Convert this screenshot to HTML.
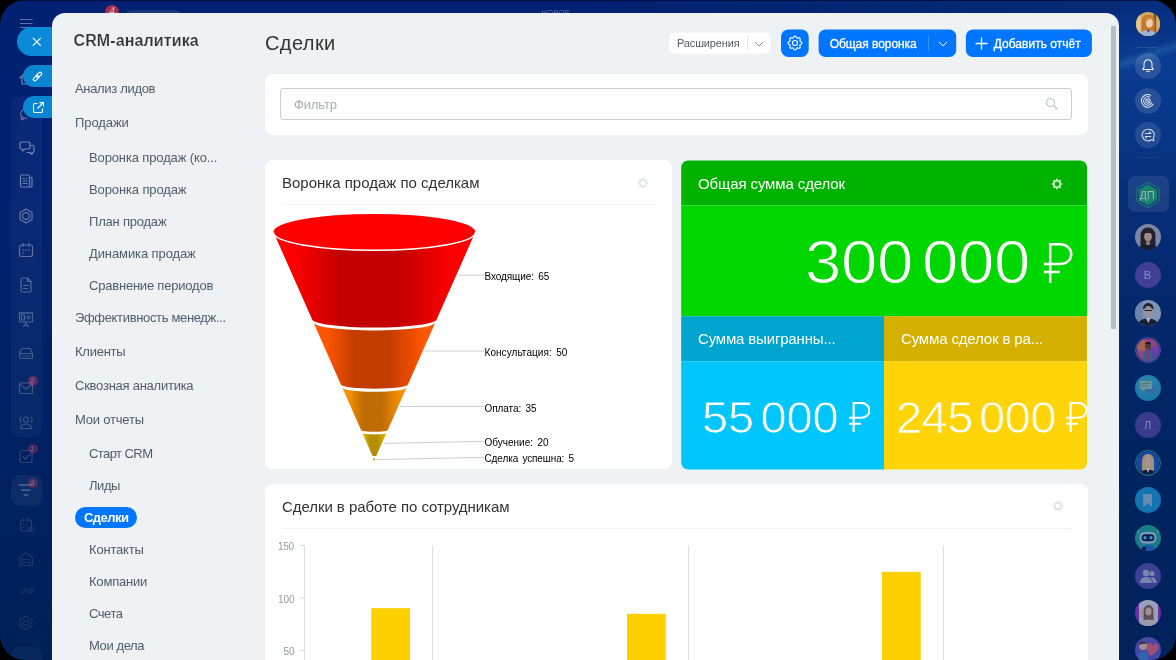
<!DOCTYPE html>
<html lang="ru">
<head>
<meta charset="utf-8">
<title>CRM-аналитика</title>
<style>
*{box-sizing:border-box;margin:0;padding:0}
html,body{width:1176px;height:660px;overflow:hidden;background:#000;font-family:"Liberation Sans",sans-serif;}
#frame{position:absolute;left:0;top:0;width:1176px;height:660px;border-radius:25px;overflow:hidden;
 background:linear-gradient(180deg,#022172 0%,#022170 30%,#012164 60%,#002058 100%);}
.abs{position:absolute}
#rbar{position:absolute;left:1119px;top:0;width:57px;height:660px;
 background:linear-gradient(180deg,#062c7c 0%,#0a3c92 9%,#09398b 20%,#063180 30%,#042a6e 50%,#022662 75%,#01235c 100%);}
#rbar2{position:absolute;left:1100px;top:0;width:20px;height:660px;
 background:linear-gradient(180deg,#062c7c 0%,#0a3c92 9%,#09398b 20%,#063180 30%,#042a6e 50%,#022662 75%,#01235c 100%);}
#streak{position:absolute;left:-8px;top:48px;width:76px;height:14px;transform:rotate(-19.5deg);background:linear-gradient(180deg,rgba(70,150,195,0) 0%,rgba(70,150,195,.26) 50%,rgba(70,150,195,0) 100%);}
#panel{position:absolute;left:52.2px;top:12.7px;width:1067.2px;height:660px;background:#eef2f4;border-radius:13px 13px 0 0;}
#menu,#content,#rbar,#lbar,#topstrip{will-change:transform}
.t{position:absolute;white-space:nowrap;line-height:1}
.mi{position:absolute;white-space:nowrap;font-size:13px;line-height:16px;color:#525c69}
.fl{font-size:10px;color:#000;word-spacing:1.6px}
.ax{font-size:10px;color:#8e9ba6}
.card{position:absolute;background:#fff;border-radius:8px}
</style>
<style id="ls">#mtitle{letter-spacing:0.12px}#m0{letter-spacing:-0.33px}#m1{letter-spacing:-0.08px}#m2{letter-spacing:-0.13px}#m3{letter-spacing:-0.12px}#m4{letter-spacing:-0.21px}#m5{letter-spacing:-0.10px}#m6{letter-spacing:-0.21px}#m7{letter-spacing:-0.34px}#m8{letter-spacing:-0.25px}#m9{letter-spacing:-0.25px}#m10{letter-spacing:-0.20px}#m11{letter-spacing:-0.57px}#m12{letter-spacing:-0.42px}#mact{letter-spacing:-0.53px}#m13{letter-spacing:-0.19px}#m14{letter-spacing:-0.20px}#m15{letter-spacing:-0.47px}#m16{letter-spacing:-0.40px}#h1{letter-spacing:0.42px}#filt{letter-spacing:-0.12px}#bext{letter-spacing:-0.14px}#bfun{letter-spacing:-0.05px}#badd{letter-spacing:0.03px}#ft{letter-spacing:-0.00px}#k1{letter-spacing:-0.12px}#k2{letter-spacing:-0.17px}#k3{letter-spacing:-0.15px}#bt{letter-spacing:-0.06px}#fl0{letter-spacing:-0.09px}#fl1{letter-spacing:0.06px}#fl2{letter-spacing:-0.07px}#fl3{letter-spacing:-0.00px}#fl4{letter-spacing:-0.11px}#ax0{letter-spacing:-0.28px}</style>
</head>
<body>
<svg width="0" height="0" style="position:absolute"><defs>
<symbol id="rub" viewBox="0 0 29 40" overflow="visible"><path d="M6.2 40V1.25H16.3A11 9.875 0 0 1 16.3 21H0M0 29H15.8" fill="none" stroke="#fff" stroke-width="2.5"/></symbol>
<symbol id="rubs" viewBox="0 0 29 40" overflow="visible"><path d="M6.2 40V1.25H16.3A11 9.875 0 0 1 16.3 21H0M0 29H15.8" fill="none" stroke="#fff" stroke-width="2.9"/></symbol>
</defs></svg>
<div id="frame">
 <div id="rbar"><div id="streak"></div>
 <svg class="abs" style="left:16.5px;top:11.8px" width="24" height="24" viewBox="0 0 26 26"><defs><clipPath id="c1"><circle cx="13" cy="13" r="13"/></clipPath></defs><g clip-path="url(#c1)"><rect width="26" height="26" fill="#d9a55e"/><rect x="0" width="5" height="26" fill="#e8c48a"/><rect x="19" width="3" height="26" fill="#7a5230"/><rect x="22" width="4" height="26" fill="#e0aa60"/><path d="M6 26V12c0-6 3-9 7.500-9s7 3 7 8v15z" fill="#c07a30"/><ellipse cx="14.500" cy="12" rx="3.800" ry="4.800" fill="#f1cfae"/><path d="M9 8c2-4 8-4 10 0-3-1-6 0-8 3z" fill="#cf8a3a"/><path d="M4 26c0-4 4-6.500 9-6.500s9 2.500 9 6.500z" fill="#9db4d4"/><path d="M12 19.500l1.500 3 1.500-3z" fill="#5a2a30"/></g></svg>
 <div class="abs" style="left:18px;top:46.500px;width:20px;height:1px;background:rgba(255,255,255,.13)"></div>
 <div class="abs" style="left:15.5px;top:53px;width:26px;height:26px;border-radius:50%;background:rgba(255,255,255,.14);"><svg style="position:absolute;left:5px;top:5px;opacity:0.92" width="16" height="16" viewBox="0 0 16 16"><g fill="none" stroke="#fff" stroke-width="1.1" stroke-linecap="round" stroke-linejoin="round"><path d="M8 1.800c-2.600 0-4 2-4 4.300v3.200l-1.300 2.200h10.600L12 9.300V6.100c0-2.300-1.400-4.300-4-4.300zM6.500 13.300h3"/></g></svg></div>
 <div class="abs" style="left:15.5px;top:87.5px;width:26px;height:26px;border-radius:50%;background:rgba(255,255,255,.13);"><svg style="position:absolute;left:5px;top:5px;opacity:0.88" width="16" height="16" viewBox="0 0 16 16"><g fill="none" stroke="#fff" stroke-width="1.1" stroke-linecap="round" stroke-linejoin="round"><path d="M13.200 11A6.300 6.300 0 1 1 10.500 2.200"/><path d="M11.600 9.800A4.200 4.200 0 1 1 9.500 4"/><circle cx="8" cy="8" r="2.200"/><path d="M7.200 7l1.600 2"/></g></svg></div>
 <div class="abs" style="left:15.5px;top:121.5px;width:26px;height:26px;border-radius:50%;background:rgba(255,255,255,.12);"><svg style="position:absolute;left:5px;top:5px;opacity:0.88" width="16" height="16" viewBox="0 0 16 16"><g fill="none" stroke="#fff" stroke-width="1.1" stroke-linecap="round" stroke-linejoin="round"><path d="M8 2.200a5.800 5.800 0 1 0 3.400 10.500l2.400 1-.6-2.500A5.800 5.800 0 0 0 8 2.200z"/><path d="M5.200 6.500h5.600l-1.400-1.400M10.800 9.500H5.200l1.400 1.400"/></g></svg></div>
 <div class="abs" style="left:18px;top:157px;width:20px;height:1px;background:rgba(255,255,255,.07)"></div>
 <div class="abs" style="left:9px;top:176.200px;width:40.700px;height:36.300px;border-radius:7px;background:rgba(255,255,255,.11)"></div>
 <svg class="abs" style="left:15px;top:181px" width="28" height="28" viewBox="0 0 28 28"><path d="M14 1.200l11.100 6.400v12.800L14 26.800 2.900 20.400V7.600z" fill="none" stroke="#1d9a78" stroke-width="1"/><path d="M14 3.600l9 5.200v10.400l-9 5.200-9-5.200V8.800z" fill="#1c9a72"/></svg>
 <div class="t" style="left:20.800px;top:189.800px;font-size:10.500px;color:rgba(215,238,228,.85);letter-spacing:.2px">ДП</div>
 <svg class="abs" style="left:15.5px;top:224px" width="26" height="26" viewBox="0 0 26 26"><defs><clipPath id="c2"><circle cx="13" cy="13" r="13"/></clipPath></defs><g clip-path="url(#c2)"><rect width="26" height="26" fill="#9aa3b8"/><path d="M5.500 26V12c0-5.500 3.500-8.500 7.500-8.500s7.500 3 7.500 8.500v14z" fill="#2c2226"/><ellipse cx="13" cy="12.500" rx="3.900" ry="5" fill="#cfa590"/><path d="M8.500 10c1-4 8-4 9 0-2-1.500-7-1.500-9 0z" fill="#2c2226"/><path d="M3 26c0-3.500 4.500-5.500 10-5.500s10 2 10 5.500z" fill="#1c1c26"/><path d="M11 17.500h4l-.5 3.500h-3z" fill="#c49a86"/></g></svg>
 <div class="abs" style="left:15.5px;top:262px;width:26px;height:26px;border-radius:50%;background:#5348a8;color:rgba(255,255,255,.55);font-size:11px;line-height:26px;text-align:center">В</div>
 <svg class="abs" style="left:15.5px;top:299.5px" width="26" height="26" viewBox="0 0 26 26"><defs><clipPath id="c3"><circle cx="13" cy="13" r="13"/></clipPath></defs><g clip-path="url(#c3)"><rect width="26" height="26" fill="#a9bad2"/><rect x="0" y="0" width="8" height="26" fill="#8fa6c6"/><path d="M8 9c0-4 2.500-6 5.500-6s5 2 5 6z" fill="#2a2a32"/><ellipse cx="13.300" cy="11" rx="4" ry="5" fill="#d2b5a2"/><path d="M9.500 10.500h7.500" stroke="#222" stroke-width="1"/><path d="M2.500 26c0-5 4.500-7.500 10.500-7.500s10.500 2.500 10.500 7.500z" fill="#1e2430"/><path d="M11 18l2.300 5 2.300-5z" fill="#e8ecf2"/></g></svg>
 <svg class="abs" style="left:15.5px;top:337px" width="26" height="26" viewBox="0 0 26 26"><defs><clipPath id="c4"><circle cx="13" cy="13" r="11.3"/></clipPath></defs><g clip-path="url(#c4)"><rect width="26" height="26" fill="#c4508e"/><circle cx="6" cy="8" r="6" fill="#e07a50"/><circle cx="21" cy="16" r="7" fill="#8a4ac0"/><path d="M8.500 26V17c0-2.500 2-4 4.500-4s4.500 1.500 4.500 4v9z" fill="#2a86a8"/><ellipse cx="13" cy="9" rx="3" ry="3.800" fill="#6a4636"/><path d="M10 7c.5-3 5.500-3 6 0z" fill="#1a1418"/><path d="M11.500 13h3v13h-3z" fill="#c83a6a"/></g><circle cx="13" cy="13" r="12.4" fill="none" stroke="#7a6ac8" stroke-width="1"/></svg>
 <div class="abs" style="left:15.5px;top:374.5px;width:26px;height:26px;border-radius:50%;background:radial-gradient(circle at 40% 35%,#4fb0b8 0,#2aa0c8 50%,#1c8cc4 100%);"><svg style="position:absolute;left:4px;top:5px;opacity:.85" width="18" height="16" viewBox="0 0 18 16"><path d="M7 6h10v7h-2v2l-3-2h-5z" fill="#4a7fc0"/><path d="M1 1h12v8H6l-3 2.500V9H1z" fill="#9fc0c0"/><path d="M3 3.500h8M3 6h6" stroke="#6aa040" stroke-width="1.200"/></svg></div>
 <div class="abs" style="left:15.5px;top:412px;width:26px;height:26px;border-radius:50%;background:#5046a4;color:rgba(255,255,255,.55);font-size:11px;line-height:26px;text-align:center">Л</div>
 <svg class="abs" style="left:15.5px;top:449.5px" width="26" height="26" viewBox="0 0 26 26"><defs><clipPath id="c5"><circle cx="13" cy="13" r="11.3"/></clipPath></defs><g clip-path="url(#c5)"><rect width="26" height="26" fill="#2358c0"/><path d="M7 22V11.500c0-5 2.700-7.500 6-7.500s6 2.500 6 7.500V22z" fill="#e2c088"/><ellipse cx="13" cy="11.300" rx="3.100" ry="4.200" fill="#efc4a8"/><path d="M9.700 9.500c.8-3.500 5.800-3.500 6.600 0-2-1.500-4.500-1.500-6.600 0z" fill="#e8ca92"/><path d="M4.500 26c0-4 3.500-6.200 8.500-6.200s8.500 2.200 8.500 6.200z" fill="#141a30"/><path d="M11.400 18.500l1.600 4.500 1.600-4.500z" fill="#f2f4fa"/></g><circle cx="13" cy="13" r="12.4" fill="none" stroke="#2fb09a" stroke-width="1"/></svg>
 <div class="abs" style="left:15.5px;top:487px;width:26px;height:26px;border-radius:50%;background:#1d9ad6;"><svg style="position:absolute;left:8.300px;top:6.500px;opacity:.82" width="9.500" height="13" viewBox="0 0 10 14"><path d="M0 0h10v14l-5-4-5 4z" fill="#b4bfdc"/></svg></div>
 <svg class="abs" style="left:15.5px;top:525px" width="26" height="26" viewBox="0 0 26 26"><defs><clipPath id="c6"><circle cx="13" cy="13" r="13"/></clipPath></defs><g clip-path="url(#c6)"><rect width="26" height="26" fill="#25a89a"/><path d="M4 9l-2-4M22 9l2-4" stroke="#7ac0e8" stroke-width="1.200"/><rect x="4.500" y="7" width="17" height="11.500" rx="5.500" fill="#b8d4f0"/><rect x="6.500" y="9.300" width="13" height="7" rx="3.500" fill="#101c48"/><circle cx="10" cy="12.800" r="1.700" fill="#48d4f4"/><circle cx="16" cy="12.800" r="1.700" fill="#48d4f4"/><path d="M6 26c0-3.800 3-6 7-6s7 2.200 7 6z" fill="#2a6ad8"/><rect x="7" y="22" width="4" height="4" fill="#101c48"/></g></svg>
 <div class="abs" style="left:15.5px;top:562.5px;width:26px;height:26px;border-radius:50%;background:#5a50b4;"><svg style="position:absolute;left:4px;top:6px;opacity:.75" width="18" height="14" viewBox="0 0 18 14"><circle cx="7" cy="4" r="3.200" fill="#cdd"/><path d="M1 14c0-4 2.500-6 6-6s6 2 6 6z" fill="#cdd"/><circle cx="13" cy="4.500" r="2.600" fill="#cdd"/><path d="M12 8c3 0 5.500 2 5.500 6H14" fill="#cdd"/></svg></div>
 <svg class="abs" style="left:15.5px;top:599.5px" width="26" height="26" viewBox="0 0 26 26"><defs><clipPath id="c7"><circle cx="13" cy="13" r="13"/></clipPath></defs><g clip-path="url(#c7)"><rect width="26" height="26" fill="#9a38d0"/><rect x="4" y="0" width="19" height="26" fill="#e4e0ea"/><path d="M8.500 20V11.500c0-4 2.200-6.500 5-6.500s5 2.500 5 6.500V20z" fill="#8a6858"/><ellipse cx="13.500" cy="11.500" rx="3" ry="4" fill="#ecc8b4"/><path d="M5 26c0-4.200 4-6.500 8.500-6.500s8.500 2.300 8.500 6.500z" fill="#ead8d0"/><path d="M4.500 17l1-8.500 2.200.4-.8 9z" fill="#ecc8b4"/></g></svg>
 <svg class="abs" style="left:15.5px;top:637px" width="26" height="26" viewBox="0 0 26 26"><defs><clipPath id="c8"><circle cx="13" cy="13" r="13"/></clipPath></defs><g clip-path="url(#c8)"><rect width="26" height="26" fill="#6a5cd0"/><path d="M11 8c1.500-3 6-3 6.500.5 1.500-3.500 7-2 6 2.500-.8 3.500-5 6-7.500 8-2-2-5.500-5-5-11z" fill="#f06a80"/><circle cx="8" cy="9" r="4" fill="#f2c8b0"/><path d="M3.500 8c0-4 7-5 8.500-1-2-.5-5 0-8.500 1z" fill="#5a3a40"/><path d="M4 26v-8c0-2 2-3.500 4.500-3.500S13 16 13 18v8z" fill="#4a8ad8"/></g></svg>
 <div class="abs" id="rdim" style="left:0;top:0;width:57px;height:660px;background:linear-gradient(180deg,rgba(0,30,88,0) 0,rgba(0,30,88,0) 8%,rgba(0,30,88,.08) 20%,rgba(0,30,88,.2) 30%,rgba(0,30,88,.25) 50%,rgba(0,30,88,.3) 75%,rgba(0,30,88,.35) 100%)"></div>
</div>
<div id="lbar">
 <div class="abs" style="left:11px;top:97px;width:31px;height:340px;border-radius:8px;background:rgba(255,255,255,.035)"></div>
 <div class="abs" style="left:11px;top:475px;width:31px;height:31px;border-radius:8px;background:rgba(255,255,255,.05)"></div>
 <div class="abs" style="left:11px;top:647px;width:31px;height:31px;border-radius:8px;background:rgba(255,255,255,.04)"></div>
 <svg class="abs" style="left:20px;top:18px;opacity:.38" width="13" height="11" viewBox="0 0 13 11"><path d="M0 1.5h12.5M0 5.5h12.5M0 9.5h12.5" stroke="#fff" stroke-width="1.1"/></svg>
 <svg class="abs" style="left:18px;top:70px;opacity:0.468" width="16" height="16" viewBox="0 0 16 16"><g fill="none" stroke="#fff" stroke-width="1.2" stroke-linecap="round" stroke-linejoin="round"><path d="M2 8l6-6 6 6M4 7v7h8V7"/></g></svg>
 <svg class="abs" style="left:17px;top:106px;opacity:0.34" width="16" height="16" viewBox="0 0 16 16"><g fill="none" stroke="#fff" stroke-width="1.2" stroke-linecap="round" stroke-linejoin="round"><path d="M9 3.500a4.500 4.500 0 1 0 1 8.500"/><circle cx="5.500" cy="12.500" r="1.200"/></g></svg>
 <svg class="abs" style="left:18.5px;top:139.5px;opacity:0.425" width="16" height="16" viewBox="0 0 16 16"><g fill="none" stroke="#fff" stroke-width="1.2" stroke-linecap="round" stroke-linejoin="round"><path d="M2.5 2h7a1.5 1.5 0 0 1 1.500 1.500v4a1.500 1.500 0 0 1-1.500 1.500H6l-2.500 2v-2h-1A1.500 1.500 0 0 1 1 7.500v-4A1.500 1.500 0 0 1 2.500 2z"/><path d="M12.500 5.500h1a1.500 1.500 0 0 1 1.500 1.500v4a1.500 1.500 0 0 1-1.500 1.500h-.5v2l-2.500-2H8"/></g></svg>
 <svg class="abs" style="left:18.3px;top:173.3px;opacity:0.399" width="16" height="16" viewBox="0 0 16 16"><g fill="none" stroke="#fff" stroke-width="1.2" stroke-linecap="round" stroke-linejoin="round"><path d="M2.500 3.500a1.500 1.500 0 0 1 1.500-1.500h6a1.500 1.500 0 0 1 1.500 1.500v9a1.500 1.500 0 0 1-1.500 1.500h-6a1.500 1.500 0 0 1-1.500-1.500z"/><path d="M5 5.500h1.500M8.500 5.500h.5M5 8h4M5 10.500h4M11.500 4.500h1.500a1 1 0 0 1 1 1v7.500a1 1 0 0 1-1 1h-2"/></g></svg>
 <svg class="abs" style="left:18px;top:207.7px;opacity:0.374" width="16" height="16" viewBox="0 0 16 16"><g fill="none" stroke="#fff" stroke-width="1.2" stroke-linecap="round" stroke-linejoin="round"><path d="M8 1l6 3.500v7l-6 3.500-6-3.500v-7z"/><path d="M8 4.300l3.300 1.900v3.700l-3.300 1.900-3.300-1.900V6.200z"/></g></svg>
 <svg class="abs" style="left:18px;top:241.5px;opacity:0.34" width="16" height="16" viewBox="0 0 16 16"><g fill="none" stroke="#fff" stroke-width="1.2" stroke-linecap="round" stroke-linejoin="round"><rect x="1.500" y="3" width="13" height="11.500" rx="2"/><path d="M5 1.500v3M11 1.500v3M4.500 8h1M7.500 8h1M10.500 8h1M4.500 11h1"/></g></svg>
 <svg class="abs" style="left:18px;top:276.5px;opacity:0.306" width="16" height="16" viewBox="0 0 16 16"><g fill="none" stroke="#fff" stroke-width="1.2" stroke-linecap="round" stroke-linejoin="round"><path d="M3 2.500a1.500 1.500 0 0 1 1.500-1.500h5l3.500 3.500v9a1.500 1.500 0 0 1-1.500 1.500h-7a1.500 1.500 0 0 1-1.500-1.500z"/><path d="M9.500 1v3.500h3.500M5.500 8.500h5M5.500 11.500h4"/></g></svg>
 <svg class="abs" style="left:18px;top:311px;opacity:0.272" width="16" height="16" viewBox="0 0 16 16"><g fill="none" stroke="#fff" stroke-width="1.2" stroke-linecap="round" stroke-linejoin="round"><rect x="1.500" y="2" width="13" height="9" rx="1"/><rect x="3.500" y="4" width="3" height="5"/><circle cx="10.500" cy="6.500" r="1.500"/><path d="M1 2h14M8 11v2M5.500 15.500l2.500-2.500 2.500 2.500"/></g></svg>
 <svg class="abs" style="left:18px;top:345.3px;opacity:0.238" width="16" height="16" viewBox="0 0 16 16"><g fill="none" stroke="#fff" stroke-width="1.2" stroke-linecap="round" stroke-linejoin="round"><path d="M1.500 9l1.500-4a2 2 0 0 1 2-1.500h6a2 2 0 0 1 2 1.500l1.500 4v3a1.500 1.500 0 0 1-1.500 1.500h-10a1.500 1.500 0 0 1-1.500-1.500zM1.500 8.500h13"/><path d="M4 11h1M7 11h5"/></g></svg>
 <svg class="abs" style="left:18px;top:379.5px;opacity:0.212" width="16" height="16" viewBox="0 0 16 16"><g fill="none" stroke="#fff" stroke-width="1.2" stroke-linecap="round" stroke-linejoin="round"><rect x="1.500" y="3" width="13" height="10.500" rx="1"/><path d="M1.500 4l6.500 5 6.500-5"/></g></svg>
 <svg class="abs" style="left:18px;top:414px;opacity:0.204" width="16" height="16" viewBox="0 0 16 16"><g fill="none" stroke="#fff" stroke-width="1.2" stroke-linecap="round" stroke-linejoin="round"><circle cx="8" cy="5.500" r="2.500"/><path d="M2.500 14.500c0-3 2.500-4.500 5.500-4.500s5.500 1.500 5.500 4.500zM3 3c-1.500 1-1.500 4 0 5M13 3c1.500 1 1.500 4 0 5"/></g></svg>
 <svg class="abs" style="left:18px;top:447.7px;opacity:0.17" width="16" height="16" viewBox="0 0 16 16"><g fill="none" stroke="#fff" stroke-width="1.2" stroke-linecap="round" stroke-linejoin="round"><rect x="2" y="2.500" width="12" height="12" rx="2"/><path d="M5 8.500l2.500 2.500 4-4.500"/></g></svg>
 <svg class="abs" style="left:18px;top:482px;opacity:.2" width="16" height="16" viewBox="0 0 16 16"><path d="M1.500 3h13M4 8h8M6.500 13h3" stroke="#fff" stroke-width="2" stroke-linecap="round"/></svg>
 <svg class="abs" style="left:18.5px;top:516.5px;opacity:0.136" width="16" height="16" viewBox="0 0 16 16"><g fill="none" stroke="#fff" stroke-width="1.2" stroke-linecap="round" stroke-linejoin="round"><rect x="1.500" y="3" width="11" height="11" rx="2"/><path d="M4.500 1.500v3M9.500 1.500v3M4 7.500h1M7 7.500h1M4 10.500h1M9 11h6M9 14h6"/></g></svg>
 <svg class="abs" style="left:18px;top:550.7px;opacity:0.102" width="16" height="16" viewBox="0 0 16 16"><g fill="none" stroke="#fff" stroke-width="1.2" stroke-linecap="round" stroke-linejoin="round"><path d="M1.500 14.500v-8l6.500-4.500 6.500 4.500v8z"/><path d="M4 14.500v-6h8v6M4 11.500h8"/></g></svg>
 <svg class="abs" style="left:18.5px;top:581.5px;opacity:0.085" width="16" height="16" viewBox="0 0 16 16"><g fill="none" stroke="#fff" stroke-width="1.2" stroke-linecap="round" stroke-linejoin="round"><path d="M1 11c2-4 5-5 7-3M3 12c1-2 3-3 4-2M10 9l3-3 2 2-3 3h-2z"/></g></svg>
 <svg class="abs" style="left:18px;top:614.5px;opacity:0.085" width="16" height="16" viewBox="0 0 16 16"><g fill="none" stroke="#fff" stroke-width="1.2" stroke-linecap="round" stroke-linejoin="round"><circle cx="8" cy="8" r="2.500"/><path d="M6.600 1.300h2.800l.5 1.700 1.300.75 1.700-.4 1.400 2.400-1.200 1.300v1.500l1.200 1.300-1.400 2.400-1.700-.4-1.300.75-.5 1.700H6.600l-.5-1.700-1.300-.75-1.700.4-1.400-2.400 1.200-1.300V7.050L1.700 5.750l1.400-2.400 1.700.4L6.100 3z"/></g></svg>
 <div class="abs" style="left:27.5px;top:375.5px;width:10px;height:10px;border-radius:5px;background:#d8305a;opacity:0.4;color:#fff;font-size:8px;line-height:10px;text-align:center">2</div>
 <div class="abs" style="left:27.5px;top:443.8px;width:10px;height:10px;border-radius:5px;background:#d8305a;opacity:0.34;color:#fff;font-size:8px;line-height:10px;text-align:center">1</div>
 <div class="abs" style="left:27.5px;top:478px;width:10px;height:10px;border-radius:5px;background:#d8305a;opacity:0.32;color:#fff;font-size:8px;line-height:10px;text-align:center">4</div>
 <div class="abs" style="left:17px;top:27px;width:60px;height:29px;border-radius:14.500px 0 0 14.500px;background:#0a8ad9"></div>
 <svg class="abs" style="left:32.300px;top:36.700px" width="9.600" height="9.600" viewBox="0 0 9 9"><path d="M0.800 0.800l7.400 7.400M8.200 0.800L0.800 8.200" stroke="#fff" stroke-width="1"/></svg>
 <div class="abs" style="left:23px;top:65px;width:60px;height:22px;border-radius:11px 0 0 11px;background:#0a85d2"></div>
 <svg class="abs" style="left:32px;top:70.500px" width="11" height="11" viewBox="0 0 11 11"><g fill="none" stroke="#fff" stroke-width="1.1"><rect x="0.300" y="4" width="6.200" height="3" rx="1.500" transform="rotate(-40 3.400 5.500) translate(-.6 1.700)"/><rect x="4.500" y="4" width="6.200" height="3" rx="1.500" transform="rotate(-40 7.600 5.500) translate(.6 -1.700)"/></g></svg>
 <div class="abs" style="left:23px;top:96px;width:60px;height:22px;border-radius:11px 0 0 11px;background:#0a85d2"></div>
 <svg class="abs" style="left:32.500px;top:101.500px" width="11" height="11" viewBox="0 0 11 11"><g fill="none" stroke="#fff" stroke-width="1.100"><path d="M4.500 1.500h-2.500a1.500 1.500 0 0 0-1.500 1.500v6a1.500 1.500 0 0 0 1.500 1.500h6a1.500 1.500 0 0 0 1.500-1.500v-2.500M4.500 6.500l5.500-5.500M6.500 0.600h4v4"/></g></svg>
</div>
<div id="rbar2"></div>
<div id="topstrip">
 <div class="abs" style="left:600px;top:0;width:519.5px;height:14px;background:linear-gradient(90deg,rgba(6,44,124,0),#062a78)"></div>
 <div class="abs" style="left:0;top:0;width:1176px;height:1px;background:rgba(0,4,30,.6)"></div>
 <div class="abs" style="left:105px;top:4.5px;width:14px;height:14px;border-radius:7px;background:#a3304c;color:rgba(255,255,255,.6);font-size:10px;line-height:14px;text-align:center;font-style:italic">4</div>
 <div class="abs" style="left:124.5px;top:10px;width:56.5px;height:14px;border-radius:7px;background:rgba(255,255,255,.09)"></div>
 <div class="t" style="left:541.5px;top:8.7px;font-size:7.5px;color:rgba(255,255,255,.36);letter-spacing:.35px">НОВОЕ</div>
</div>
 <div id="panel"></div>
 <div class="abs" style="left:1111.3px;top:25.5px;width:4.8px;height:303.5px;background:#b8bebf"></div>
 <div id="menu">
 <div class="t" id="mtitle" style="left:73.5px;top:33.2px;font-size:16px;font-weight:bold;color:#333;-webkit-text-stroke:.2px #eef2f4;">CRM-аналитика</div>
 <div class="mi" id="m0" style="left:75px;top:81px">Анализ лидов</div>
 <div class="mi" id="m1" style="left:75px;top:115px">Продажи</div>
 <div class="mi" id="m2" style="left:89px;top:150px">Воронка продаж (ко...</div>
 <div class="mi" id="m3" style="left:89px;top:181.5px">Воронка продаж</div>
 <div class="mi" id="m4" style="left:89px;top:213.5px">План продаж</div>
 <div class="mi" id="m5" style="left:89px;top:245.5px">Динамика продаж</div>
 <div class="mi" id="m6" style="left:89px;top:277.5px">Сравнение периодов</div>
 <div class="mi" id="m7" style="left:75px;top:309.5px">Эффективность менедж...</div>
 <div class="mi" id="m8" style="left:75px;top:343.5px">Клиенты</div>
 <div class="mi" id="m9" style="left:75px;top:377.5px">Сквозная аналитика</div>
 <div class="mi" id="m10" style="left:75px;top:411.5px">Мои отчеты</div>
 <div class="mi" id="m11" style="left:89px;top:446px">Старт CRM</div>
 <div class="mi" id="m12" style="left:89px;top:478px">Лиды</div>
 <div class="mi" id="m13" style="left:89px;top:542px">Контакты</div>
 <div class="mi" id="m14" style="left:89px;top:574px">Компании</div>
 <div class="mi" id="m15" style="left:89px;top:606px">Счета</div>
 <div class="mi" id="m16" style="left:89px;top:638px">Мои дела</div>
 <div class="abs" style="left:75px;top:507px;width:62px;height:21px;border-radius:11px;background:#0075ff"></div>
 <div class="mi" id="mact" style="left:84px;top:509.5px;color:#fff;font-weight:bold">Сделки</div>
</div>
<div id="content">
 <div class="t" id="h1" style="left:265px;top:33.4px;font-size:20px;color:#333">Сделки</div>
 <!-- header buttons -->
<svg class="abs" style="left:660px;top:20px" width="440" height="45" viewBox="660 20 440 45">
<rect x="669" y="32.7" width="101.400" height="21" rx="5" fill="#fff"/>
<rect x="781" y="29.400" width="27.700" height="27.500" rx="7.500" fill="#0075ff"/>
<rect x="818.600" y="29.400" width="137.600" height="27.600" rx="7" fill="#0075ff"/>
<rect x="965.900" y="29.400" width="126" height="27.600" rx="7" fill="#0075ff"/>
</svg>
 <div class="t" id="bext" style="left:677px;top:38px;font-size:11px;color:#525c69">Расширения</div>
 <div class="abs" style="left:747px;top:37px;width:1px;height:13px;background:#e4e7ea"></div>
 <svg class="abs" style="left:754px;top:40px" width="10" height="8" viewBox="0 0 10 8"><path d="M1 2l4 4 4-4" fill="none" stroke="#7f8893" stroke-width="1"/></svg>
 <svg class="abs" id="gearbtn" style="left:786.900px;top:35.200px" width="16" height="16" viewBox="0 0 16 16"><g fill="none" stroke="#fff" stroke-width="1.150"><circle cx="8" cy="8" r="2.500"/><path d="M8.00 1.10L8.44 1.22L8.85 1.53L9.20 1.97L9.49 2.42L9.77 2.79L10.07 3.01L10.43 3.07L10.89 3.00L11.42 2.89L11.97 2.82L12.48 2.89L12.88 3.12L13.11 3.52L13.18 4.03L13.11 4.58L13.00 5.11L12.93 5.57L12.99 5.93L13.21 6.23L13.58 6.51L14.03 6.80L14.47 7.15L14.78 7.56L14.90 8.00L14.78 8.44L14.47 8.85L14.03 9.20L13.58 9.49L13.21 9.77L12.99 10.07L12.93 10.43L13.00 10.89L13.11 11.42L13.18 11.97L13.11 12.48L12.88 12.88L12.48 13.11L11.97 13.18L11.42 13.11L10.89 13.00L10.43 12.93L10.07 12.99L9.77 13.21L9.49 13.58L9.20 14.03L8.85 14.47L8.44 14.78L8.00 14.90L7.56 14.78L7.15 14.47L6.80 14.03L6.51 13.58L6.23 13.21L5.93 12.99L5.57 12.93L5.11 13.00L4.58 13.11L4.03 13.18L3.52 13.11L3.12 12.88L2.89 12.48L2.82 11.97L2.89 11.42L3.00 10.89L3.07 10.43L3.01 10.07L2.79 9.77L2.42 9.49L1.97 9.20L1.53 8.85L1.22 8.44L1.10 8.00L1.22 7.56L1.53 7.15L1.97 6.80L2.42 6.51L2.79 6.23L3.01 5.93L3.07 5.57L3.00 5.11L2.89 4.58L2.82 4.03L2.89 3.52L3.12 3.12L3.52 2.89L4.03 2.82L4.58 2.89L5.11 3.00L5.57 3.07L5.93 3.01L6.23 2.79L6.51 2.42L6.80 1.97L7.15 1.53L7.56 1.22Z" stroke-linejoin="round"/></g></svg>
 <div class="t" id="bfun" style="left:829.7px;top:37.6px;font-size:12px;color:#fff;-webkit-text-stroke:.3px #fff">Общая воронка</div>
 <div class="abs" style="left:928.2px;top:36px;width:1px;height:15px;background:rgba(255,255,255,.22)"></div>
 <svg class="abs" style="left:938px;top:40px" width="10" height="8" viewBox="0 0 10 8"><path d="M0.8 1.8l4.2 4 4.2-4" fill="none" stroke="#fff" stroke-width="1"/></svg>
 <svg class="abs" style="left:975px;top:37px" width="13" height="13" viewBox="0 0 13 13"><path d="M6.5 0.5v12M0.5 6.5h12" stroke="#fff" stroke-width="1.3"/></svg>
 <div class="t" id="badd" style="left:993.7px;top:37.6px;font-size:12px;color:#fff;-webkit-text-stroke:.3px #fff">Добавить отчёт</div>
 <!-- filter -->
 <div class="card" style="left:265px;top:74px;width:823px;height:61px"></div>
 <div class="abs" style="left:280px;top:88px;width:792px;height:32px;border:1px solid #cad0d6;border-radius:3px;background:#fff"></div>
 <div class="t" id="filt" style="left:294px;top:97.5px;font-size:13px;color:#a8adb4">Фильтр</div>
 <svg class="abs" style="left:1045px;top:97px" width="14" height="14" viewBox="0 0 14 14"><circle cx="5.5" cy="5.5" r="4" fill="none" stroke="#c0c6cc" stroke-width="1.2"/><path d="M8.5 8.5l4 4" stroke="#c0c6cc" stroke-width="1.5"/></svg>
 <!-- funnel card -->
 <div class="card" style="left:265px;top:160px;width:407px;height:309px"></div>
 <div class="t" id="ft" style="left:282px;top:175.1px;font-size:15px;color:#333">Воронка продаж по сделкам</div>
 <div class="abs" style="left:282px;top:204px;width:374px;height:1px;background:#eef0f2"></div>
<svg class="abs" style="left:265px;top:160px" width="407" height="309" viewBox="265 160 407 309">
<defs>
<linearGradient id="g1" x1="0" x2="1" y1="0" y2="0"><stop offset="0" stop-color="#ff0000"/><stop offset="0.1" stop-color="#ff0000"/><stop offset="0.33" stop-color="#c20000"/><stop offset="0.62" stop-color="#c20000"/><stop offset="0.9" stop-color="#ff0000"/><stop offset="1" stop-color="#ff0000"/></linearGradient>
<linearGradient id="g2" x1="0" x2="1" y1="0" y2="0"><stop offset="0" stop-color="#ff5600"/><stop offset="0.1" stop-color="#ff5600"/><stop offset="0.33" stop-color="#c43d00"/><stop offset="0.62" stop-color="#c43d00"/><stop offset="0.9" stop-color="#ff5600"/><stop offset="1" stop-color="#ff5600"/></linearGradient>
<linearGradient id="g3" x1="0" x2="1" y1="0" y2="0"><stop offset="0" stop-color="#f79000"/><stop offset="0.1" stop-color="#f79000"/><stop offset="0.33" stop-color="#bf6c06"/><stop offset="0.62" stop-color="#bf6c06"/><stop offset="0.9" stop-color="#f79000"/><stop offset="1" stop-color="#f79000"/></linearGradient>
<linearGradient id="g4" x1="0" x2="1" y1="0" y2="0"><stop offset="0" stop-color="#dcae00"/><stop offset="0.1" stop-color="#dcae00"/><stop offset="0.33" stop-color="#b08e00"/><stop offset="0.62" stop-color="#b08e00"/><stop offset="0.9" stop-color="#dcae00"/><stop offset="1" stop-color="#dcae00"/></linearGradient>
</defs>
<path d="M273.40 232.00 A101.00 18.00 0 0 0 475.40 232.00 L436.86 319.10 A62.46 8.50 0 0 1 311.94 319.10 Z" fill="url(#g1)"/>
<path d="M313.36 322.30 A61.04 8.10 0 0 0 435.44 322.30 L408.05 384.20 A33.65 4.50 0 0 1 340.75 384.20 Z" fill="url(#g2)"/>
<path d="M342.25 387.60 A32.15 4.20 0 0 0 406.55 387.60 L387.83 429.90 A13.43 1.80 0 0 1 360.97 429.90 Z" fill="url(#g3)"/>
<path d="M362.39 433.10 A12.01 1.30 0 0 0 386.41 433.10 L376.37 455.80 A1.97 0.30 0 0 1 372.43 455.80 Z" fill="url(#g4)"/>
<ellipse cx="374.4" cy="232" rx="101" ry="18" fill="#fd0000"/>
<path d="M273.40 232.3 A101 18 0 0 0 475.40 232.3" fill="none" stroke="#fff" stroke-width="1.5"/>
<rect x="373.2" y="458.3" width="2" height="2.1" fill="#b9ad10"/>
<path d="M458 275.2L484 275.2" stroke="#d0d0d0" stroke-width="1"/>
<path d="M425 351L484 351" stroke="#d0d0d0" stroke-width="1"/>
<path d="M400 406.5L484 406.5" stroke="#d0d0d0" stroke-width="1"/>
<path d="M384.1 443.4L484 441.3" stroke="#d0d0d0" stroke-width="1"/>
<path d="M376.3 459.6L484 457.3" stroke="#d0d0d0" stroke-width="1"/>
</svg>
 <div class="t fl" id="fl0" style="left:484.5px;top:272.1px">Входящие: 65</div>
 <div class="t fl" id="fl1" style="left:484.5px;top:348.1px">Консультация: 50</div>
 <div class="t fl" id="fl2" style="left:484.5px;top:403.6px">Оплата: 35</div>
 <div class="t fl" id="fl3" style="left:484.5px;top:438.1px">Обучение: 20</div>
 <div class="t fl" id="fl4" style="left:484.5px;top:453.6px">Сделка успешна: 5</div>
 <!-- kpi card -->
<svg class="abs" style="left:675px;top:155px" width="420" height="320" viewBox="675 155 420 320"><defs><clipPath id="kc"><rect x="681.200" y="160.500" width="405.800" height="309" rx="7"/></clipPath></defs><g clip-path="url(#kc)">
<rect x="675" y="155" width="420" height="50.500" fill="#00b200"/>
<rect x="675" y="205.500" width="420" height="110.750" fill="#00d600"/>
<rect x="675" y="316.250" width="209" height="45" fill="#00a5cf"/>
<rect x="675" y="361.250" width="209" height="115" fill="#00c6fb"/>
<rect x="884" y="316.250" width="211" height="45" fill="#d4b100"/>
<rect x="884" y="361.250" width="211" height="115" fill="#ffd50a"/>
</g></svg>
 <div class="abs" id="kpi" style="left:681px;top:160.2px;width:406px;height:309.3px;overflow:hidden">
  <div class="t" id="k1" style="left:17px;top:16px;font-size:15px;color:#fff">Общая сумма сделок</div>
  <div class="t" id="k2" style="left:17px;top:171px;font-size:15px;color:#fff">Сумма выигранны...</div>
  <div class="t" id="k3" style="left:220px;top:171px;font-size:15px;color:#fff">Сумма сделок в ра...</div>
  <svg class="abs" style="left:362.7px;top:82.5px" width="29" height="40"><use href="#rub"/></svg>
  <svg class="abs" style="left:167.7px;top:242px" width="21.75" height="30"><use href="#rubs"/></svg>
  <svg class="abs" style="left:385px;top:242px" width="21.75" height="30"><use href="#rubs"/></svg>
  <div class="t big" id="n1" style="left:124.3px;top:71.8px;font-size:61px;color:#fff;-webkit-text-stroke:1.1px #00d600;transform:scaleX(1.07);transform-origin:0 0;word-spacing:-8.2px;letter-spacing:-0.3px">300 000</div>
  <div class="t big" id="n2" style="left:21px;top:235.7px;font-size:44px;color:#fff;-webkit-text-stroke:.75px #00c6fb;transform:scaleX(1.07);transform-origin:0 0;word-spacing:-5.9px;letter-spacing:-0.2px">55 000</div>
  <div class="t big" id="n3" style="left:215px;top:235.7px;font-size:44px;color:#fff;-webkit-text-stroke:.75px #ffd50a;transform:scaleX(1.07);transform-origin:0 0;word-spacing:-5.9px;letter-spacing:-0.55px">245 000</div>
 </div>
 <svg class="abs" style="left:1050.4px;top:176.6px" width="14" height="14" viewBox="0 0 14 14"><path d="M7.00 1.10L8.53 3.30L11.17 2.83L10.70 5.47L12.90 7.00L10.70 8.53L11.17 11.17L8.53 10.70L7.00 12.90L5.47 10.70L2.83 11.17L3.30 8.53L1.10 7.00L3.30 5.47L2.83 2.83L5.47 3.30ZM4.70 7.00a2.30 2.30 0 1 0 4.60 0a2.30 2.30 0 1 0 -4.60 0Z" fill="rgba(255,255,255,.72)" fill-rule="evenodd"/></svg>
 <svg class="abs" style="left:636px;top:176px" width="14" height="14" viewBox="0 0 14 14"><path d="M7.00 1.10L8.53 3.30L11.17 2.83L10.70 5.47L12.90 7.00L10.70 8.53L11.17 11.17L8.53 10.70L7.00 12.90L5.47 10.70L2.83 11.17L3.30 8.53L1.10 7.00L3.30 5.47L2.83 2.83L5.47 3.30ZM4.70 7.00a2.30 2.30 0 1 0 4.60 0a2.30 2.30 0 1 0 -4.60 0Z" fill="#e5e8ea" fill-rule="evenodd"/></svg>
 <!-- bottom card -->
 <div class="card" style="left:265px;top:484px;width:823px;height:200px"></div>
 <svg class="abs" style="left:1051px;top:499.3px" width="14" height="14" viewBox="0 0 14 14"><path d="M7.00 1.10L8.53 3.30L11.17 2.83L10.70 5.47L12.90 7.00L10.70 8.53L11.17 11.17L8.53 10.70L7.00 12.90L5.47 10.70L2.83 11.17L3.30 8.53L1.10 7.00L3.30 5.47L2.83 2.83L5.47 3.30ZM4.70 7.00a2.30 2.30 0 1 0 4.60 0a2.30 2.30 0 1 0 -4.60 0Z" fill="#e5e8ea" fill-rule="evenodd"/></svg>
 <div class="t" id="bt" style="left:282px;top:498.9px;font-size:15px;color:#333">Сделки в работе по сотрудникам</div>
 <div class="abs" style="left:282px;top:528px;width:789px;height:1px;background:#eef0f2"></div>
<svg class="abs" style="left:265px;top:530px" width="822" height="130" viewBox="265 530 822 130">
<g stroke="#dcdfe2" stroke-width="1" fill="none">
<path d="M304.5 545.5V660M300 545.5h4.5M300 598h4.5M300 650.5h4.5"/>
<path d="M432.5 545.5V660M688.5 545.5V660M943.5 545.5V660"/>
</g>
<rect x="371.3" y="608.2" width="38.7" height="60" fill="#ffd000"/>
<rect x="627" y="613.8" width="38.7" height="60" fill="#ffd000"/>
<rect x="882" y="571.8" width="38.7" height="90" fill="#ffd000"/>
</svg>
 <div class="t ax" id="ax0" style="left:278px;top:542.3px">150</div>
 <div class="t ax" id="ax1" style="left:278px;top:594.8px">100</div>
 <div class="t ax" id="ax2" style="left:283.5px;top:647.3px">50</div>
</div>
</div>
</body>
</html>
